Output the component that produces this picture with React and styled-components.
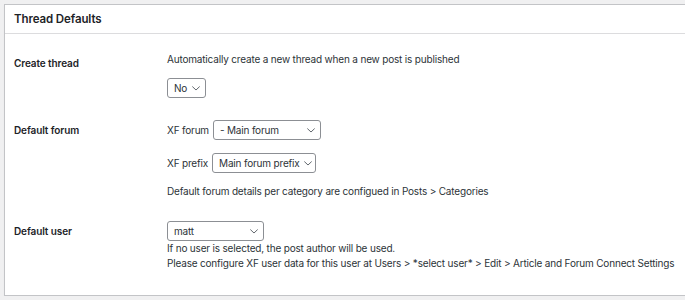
import React from 'react';
import styled, { createGlobalStyle } from 'styled-components';

const GlobalStyle = createGlobalStyle`
  html, body {
    margin: 0;
    padding: 0;
    background: #f0f0f1;
    overflow: hidden;
  }
  body {
    font-family: Inter, "Noto Sans", "Liberation Sans", sans-serif;
    color: #1d2327;
  }
`;

function Chevron() {
	return (
		<svg width="8" height="5" viewBox="0 0 8 5" fill="none" style={{ flexShrink: 0 }}>
			<path d="M0.6 0.8 L4 4 L7.4 0.8" stroke="#50575e" strokeWidth="0.9" strokeLinecap="round" strokeLinejoin="round" />
		</svg>
	);
}

function Dropdown({ value, width }) {
	return (
		<SelectBox $width={width}>
			<span>{value}</span>
			<Chevron />
		</SelectBox>
	);
}

function App() {
	return (
		<>
			<GlobalStyle />
			<Card>
				<Header>Thread Defaults</Header>
				<Body>
					<Row>
						<Label>Create thread</Label>
						<Field>
							<Description>Automatically create a new thread when a new post is published</Description>
							<Dropdown value="No" width={39} />
						</Field>
					</Row>
					<Row $gap={22}>
						<Label $pad={3}>Default forum</Label>
						<Field>
							<Inline>
								XF forum
								<Dropdown value="- Main forum" width={108} />
							</Inline>
							<Inline $top={13}>
								XF prefix
								<Dropdown value="Main forum prefix" width={104} />
							</Inline>
							<Note>Default forum details per category are configued in Posts &gt; Categories</Note>
						</Field>
					</Row>
					<Row $gap={23}>
						<Label $pad={3}>Default user</Label>
						<Field>
							<Dropdown value="matt" width={97} />
							<Help>If no user is selected, the post author will be used.</Help>
							<Help>Please configure XF user data for this user at Users &gt; *select user* &gt; Edit &gt; Article and Forum Connect Settings</Help>
						</Field>
					</Row>
				</Body>
			</Card>
		</>
	);
}

const Card = styled.section`
  margin: 4px -20px 0 4px;
  background: #fff;
  border: 1px solid #c3c4c7;
  box-shadow: 0 1px 1px rgba(0, 0, 0, 0.06);
`;

const Header = styled.h2`
  margin: 0;
  height: 28px;
  display: flex;
  align-items: center;
  padding: 0 9px;
  font-size: 11.5px;
  font-weight: 600;
  letter-spacing: -0.1px;
  color: #1d2327;
  border-bottom: 1px solid #dcdcde;
`;

const Body = styled.div`
  padding: 18px 9px 24px;
`;

const Row = styled.div`
  display: grid;
  grid-template-columns: 153px 1fr;
  margin-top: ${(p) => (p.$gap ? `${p.$gap}px` : '0')};
`;

const Label = styled.div`
  padding-top: ${(p) => (p.$pad != null ? p.$pad : 4)}px;
  font-size: 10px;
  line-height: 14px;
  font-weight: 600;
  letter-spacing: -0.1px;
  color: #1d2327;
`;

const Field = styled.div`
  display: flex;
  flex-direction: column;
  align-items: flex-start;
  font-size: 10px;
  line-height: 14px;
  letter-spacing: -0.18px;
  color: #2c3338;
`;

const Description = styled.p`
  margin: 0 0 12px;
`;

const Inline = styled.div`
  display: flex;
  align-items: center;
  gap: 4px;
  margin-top: ${(p) => (p.$top ? `${p.$top}px` : '0')};
`;

const SelectBox = styled.div`
  box-sizing: border-box;
  width: ${(p) => p.$width}px;
  height: 20px;
  display: flex;
  align-items: center;
  justify-content: space-between;
  gap: 4px;
  padding: 0 5px 0 6px;
  border: 1px solid #8c8f94;
  border-radius: 3px;
  background: #fff;
  font-size: 10px;
  color: #2c3338;
  white-space: nowrap;
`;

const Note = styled.p`
  margin: 11px 0 0;
`;

const Help = styled.p`
  margin: 0;
  line-height: 15px;
`;

export default App;
